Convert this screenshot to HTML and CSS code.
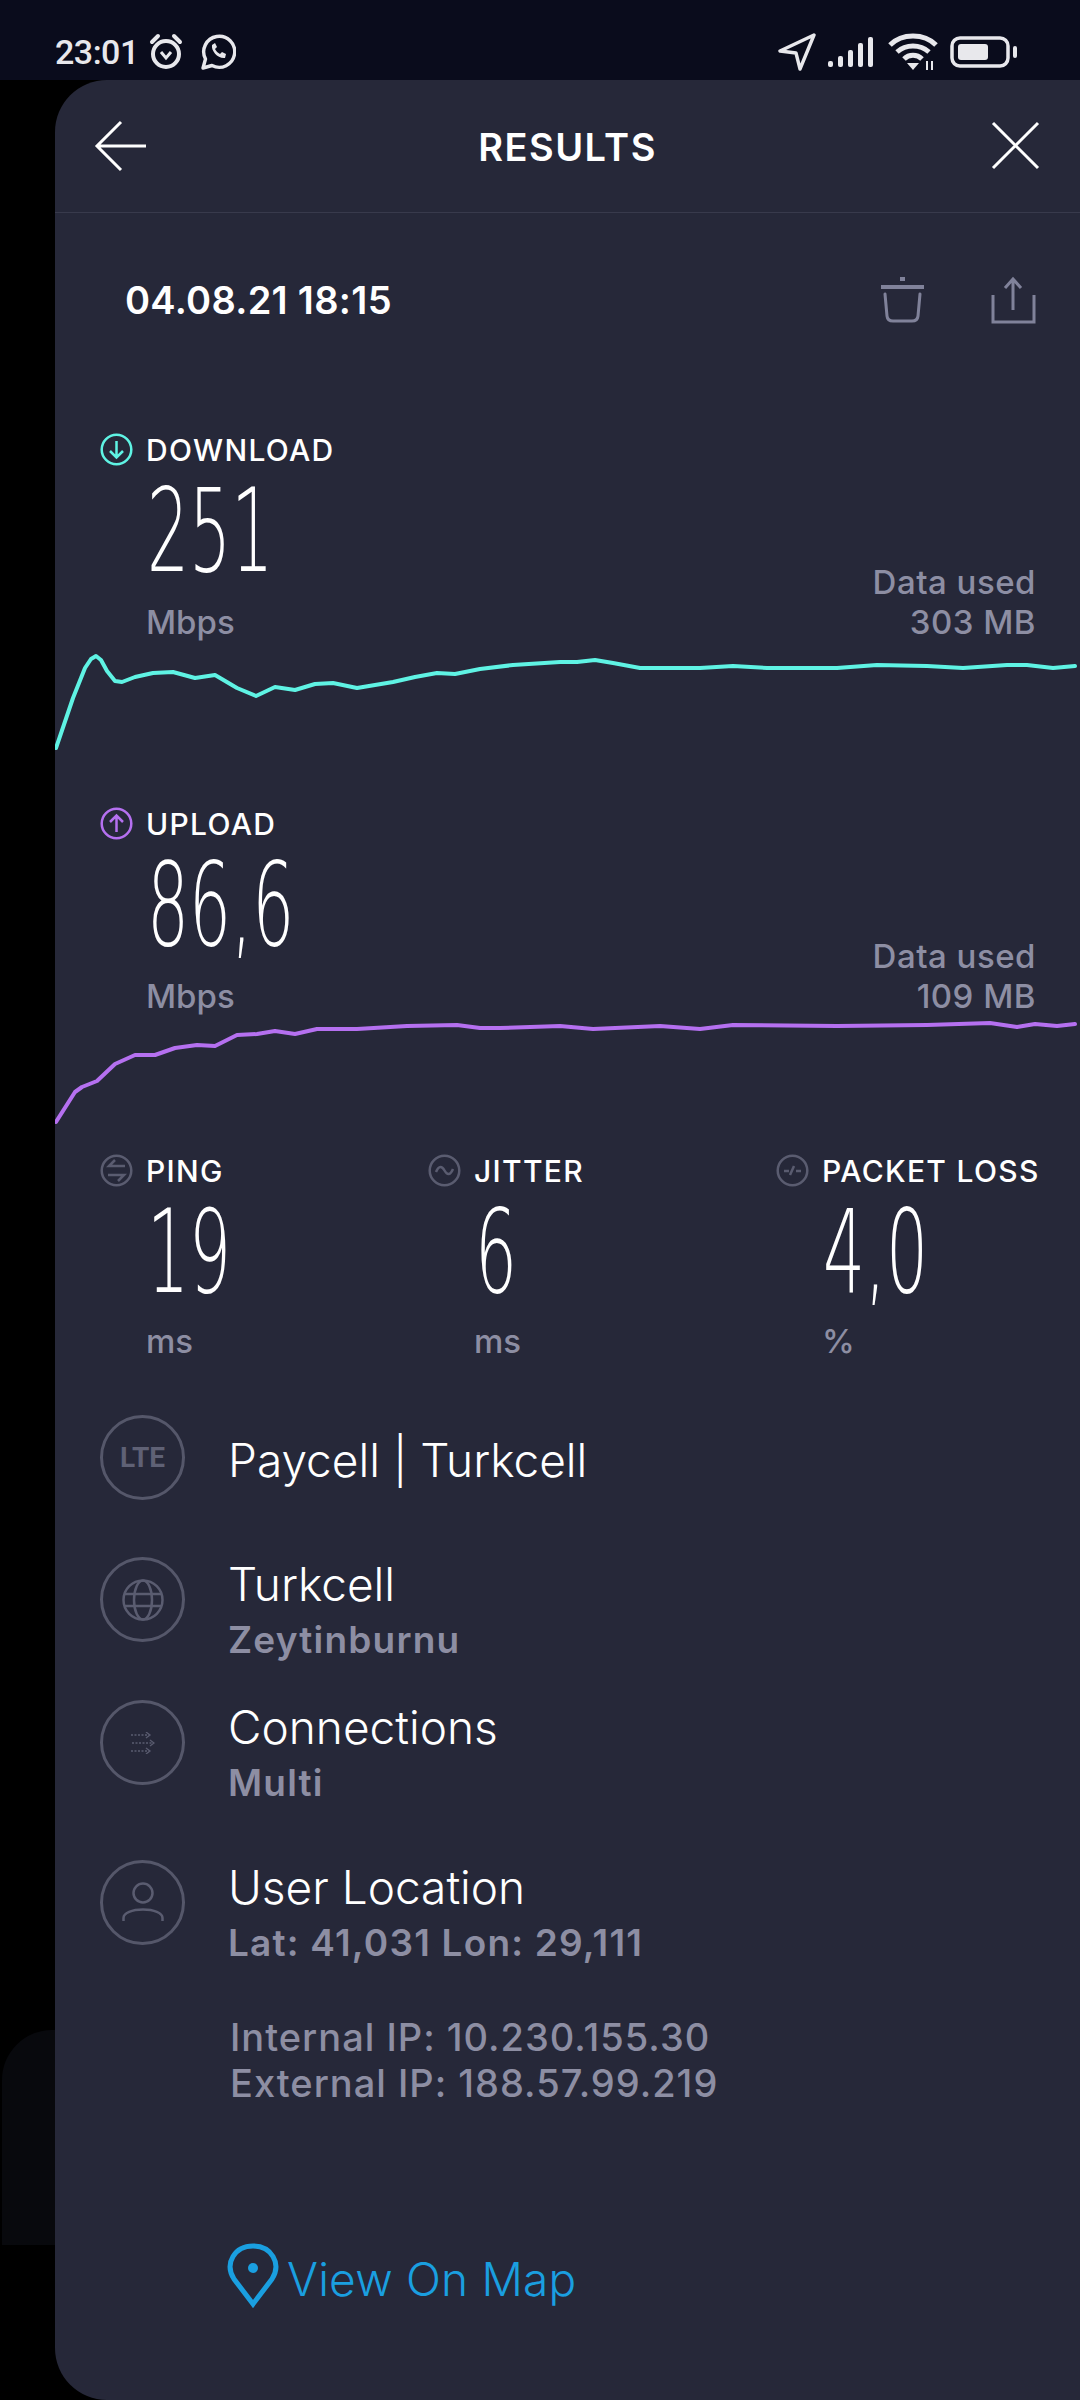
FILE: index.html
```html
<!DOCTYPE html>
<html lang="en">
<head>
  <meta charset="UTF-8">
  <meta name="viewport" content="width=device-width, initial-scale=1.0">
  <title>Results</title>
  <link rel="stylesheet" href="styles.css">
</head>
<body>
  <div class="status-bar">
    <div class="status-left">
      <span class="clock">23:01</span>
      <svg class="st-alarm" width="38" height="38" viewBox="0 0 38 38" fill="none" stroke="#e8e8ec" stroke-width="4"><circle cx="19" cy="21" r="13"/><path d="M5 9 L11 3 M33 9 L27 3" stroke-linecap="round"/><path d="M14 19 L19 25 L24 19" stroke-width="3"/></svg>
      <svg class="st-wa" width="36" height="38" viewBox="0 0 36 38" fill="none" stroke="#e8e8ec" stroke-width="3.4"><path d="M3 35 L5.5 26 A15.5 15.5 0 1 1 12 32.500 Z" stroke-linejoin="round"/><path d="M12 12 C11 18 18 26 25 25 L26 21 L22 19 L20 21 C18 20 16 18 15 16 L17 14 L15 10 Z" fill="#e8e8ec" stroke="none"/></svg>
    </div>
    <div class="status-right">
      <svg width="38" height="38" viewBox="0 0 38 38" fill="none" stroke="#e8e8ec" stroke-width="3.4" stroke-linejoin="round"><path d="M36 2 L2 18 L18 20 L22 36 Z"/></svg>
      <svg width="48" height="32" viewBox="0 0 48 32" fill="#e8e8ec"><rect x="0" y="25" width="5" height="6" rx="2"/><rect x="10" y="20" width="5" height="11" rx="2"/><rect x="20" y="14" width="5" height="17" rx="2"/><rect x="30" y="7" width="5" height="24" rx="2"/><rect x="40" y="1" width="5" height="30" rx="2"/></svg>
      <svg width="50" height="38" viewBox="0 0 50 38" fill="none" stroke="#e8e8ec" stroke-width="5"><path d="M2 12 C14 0 36 0 48 12"/><path d="M9 19 C18 11 32 11 41 19"/><path d="M16 26 C21 21 29 21 34 26"/><path d="M19 30 L25 37 L31 30 Z" fill="#e8e8ec" stroke="none"/><path d="M39 28 V37 M44 28 V37" stroke-width="2"/></svg>
      <svg width="68" height="32" viewBox="0 0 68 32" fill="none"><rect x="2" y="2" width="56" height="28" rx="8" stroke="#e8e8ec" stroke-width="3.500"/><rect x="8" y="8" width="30" height="16" rx="3" fill="#e8e8ec"/><rect x="63" y="10" width="4" height="12" rx="2" fill="#e8e8ec"/></svg>
    </div>
  </div>

  <div class="ghost-card"></div>

  <main class="panel">
    <header class="top-bar">
      <svg width="52" height="52" viewBox="0 0 52 52" fill="none" stroke="#fff" stroke-width="3"><path d="M52 26 H3 M27 2 L3 26 L27 50"/></svg>
      <h1>RESULTS</h1>
      <svg width="52" height="52" viewBox="0 0 52 52" fill="none" stroke="#fff" stroke-width="3"><path d="M4 3 L49 48 M49 3 L4 48"/></svg>
    </header>

    <div class="date-row">
      <span class="date">04.08.21 18:15</span>
      <div class="date-actions">
        <svg width="48" height="48" viewBox="0 0 48 48" fill="none" stroke="#80829a" stroke-width="3"><path d="M2 11 H45" stroke-width="4"/><path d="M21 3 H26" stroke-width="4"/><path d="M6 18 L8 40 Q8.500 45 14 45 H33 Q38.500 45 39 40 L41 18" stroke-linecap="round"/></svg>
        <svg width="48" height="48" viewBox="0 0 48 48" fill="none" stroke="#80829a" stroke-width="3"><path d="M24 34 V3 M16 12 L24 3 L32 12"/><path d="M4 19 V46 H45 V19"/></svg>
      </div>
    </div>

    <section class="metric">
      <div class="label">
        <svg class="label-icon" width="33" height="33" viewBox="0 0 33 33" fill="none" stroke="#5ff3e4" stroke-width="2.500"><circle cx="16.500" cy="16.500" r="14.800"/><path d="M16.500 8 V24 M10 18 L16.500 24.500 L23 18"/></svg>
        <span>DOWNLOAD</span>
      </div>
      <div class="metric-body">
        <div>
          <div class="value"><span class="digits">251</span></div>
          <div class="unit">Mbps</div>
        </div>
        <div class="used">Data used<br>303 MB</div>
      </div>
      <svg class="chart" width="1025" height="105" viewBox="55 645 1025 105" fill="none" stroke="#5ff3e4" stroke-width="4" stroke-linejoin="round" stroke-linecap="round"><polyline points="56,747 73,697 85,667 91,658 96,655 101,659 107,670 115,680 122,681 135,676 153,672 173,671 195,677 215,674 237,687 256,695 275,686 295,689 315,683 333,682 357,687 393,681 415,676 437,672 455,673 480,668 513,664 560,661 577,661 595,659 613,662 640,667 667,667 700,667 733,665 767,667 800,667 837,667 877,664 927,665 963,667 1007,664 1027,664 1053,667 1075,665"/></svg>
    </section>

    <section class="metric">
      <div class="label">
        <svg class="label-icon" width="33" height="33" viewBox="0 0 33 33" fill="none" stroke="#b570f0" stroke-width="2.500"><circle cx="16.500" cy="16.500" r="14.800"/><path d="M16.500 25 V9 M10 15 L16.500 8.500 L23 15"/></svg>
        <span>UPLOAD</span>
      </div>
      <div class="metric-body">
        <div>
          <div class="value"><span class="digits">86,6</span></div>
          <div class="unit">Mbps</div>
        </div>
        <div class="used">Data used<br>109 MB</div>
      </div>
      <svg class="chart" width="1025" height="105" viewBox="55 1018 1025 105" fill="none" stroke="#b570f0" stroke-width="4" stroke-linejoin="round" stroke-linecap="round"><polyline points="56,1120 75,1090 82,1085 97,1079 115,1062 135,1053 155,1053 175,1046 197,1043 215,1044 237,1033 257,1032 275,1029 295,1032 317,1027 357,1027 407,1024 457,1023 480,1026 500,1026 560,1024 593,1027 660,1024 700,1027 733,1023 837,1024 927,1023 990,1021 1017,1025 1035,1022 1057,1024 1075,1022"/></svg>
    </section>

    <section class="stats">
      <div class="stat">
        <div class="label">
          <svg class="label-icon" width="33" height="33" viewBox="0 0 33 33" fill="none" stroke="#5a5c70" stroke-width="2.500"><circle cx="16.500" cy="16.500" r="14.800"/><path d="M25 12 H9 L15 6 M8 21 H24 L18 27"/></svg>
          <span>PING</span>
        </div>
        <div class="value"><span class="digits">19</span></div>
        <div class="unit unit-small">ms</div>
      </div>
      <div class="stat">
        <div class="label">
          <svg class="label-icon" width="33" height="33" viewBox="0 0 33 33" fill="none" stroke="#5a5c70" stroke-width="2.500"><circle cx="16.500" cy="16.500" r="14.800"/><path d="M8 18 C11 11 14 12 16.500 16.500 C19 21 22 22 25 15"/></svg>
          <span>JITTER</span>
        </div>
        <div class="value"><span class="digits">6</span></div>
        <div class="unit unit-small">ms</div>
      </div>
      <div class="stat">
        <div class="label">
          <svg class="label-icon" width="33" height="33" viewBox="0 0 33 33" fill="none" stroke="#5a5c70" stroke-width="2.500"><circle cx="16.500" cy="16.500" r="14.800"/><path d="M8 17 H13 M14 21 L18 12 M20 17 H25"/></svg>
          <span>PACKET LOSS</span>
        </div>
        <div class="value"><span class="digits">4,0</span></div>
        <div class="unit unit-small">%</div>
      </div>
    </section>

    <section class="info">
      <div class="info-row row-carrier">
        <div class="info-icon"><span class="lte">LTE</span></div>
        <div class="info-text"><div class="info-title">Paycell | Turkcell</div></div>
      </div>
      <div class="info-row row-isp">
        <div class="info-icon">
          <svg width="42" height="42" viewBox="0 0 42 42" fill="none" stroke="#5a5c70" stroke-width="2.500"><circle cx="21" cy="21" r="19.500"/><ellipse cx="21" cy="21" rx="9" ry="19.500"/><path d="M2 15 H40 M2 27 H40"/></svg>
        </div>
        <div class="info-text"><div class="info-title">Turkcell</div><div class="info-sub">Zeytinburnu</div></div>
      </div>
      <div class="info-row row-conn">
        <div class="info-icon">
          <svg width="24" height="22" viewBox="0 0 24 22" fill="none" stroke="#5a5c70" stroke-width="1.500"><path d="M0 3 H18 M1 11 H22 M0 19 H18" stroke-dasharray="2 1.500"/><path d="M15 0 L19 3 L15 6 M19 8 L23 11 L19 14 M15 16 L19 19 L15 22" stroke-width="1.300"/></svg>
        </div>
        <div class="info-text"><div class="info-title">Connections</div><div class="info-sub">Multi</div></div>
      </div>
      <div class="info-row row-user">
        <div class="info-icon">
          <svg width="42" height="42" viewBox="0 0 42 42" fill="none" stroke="#5a5c70" stroke-width="2.500"><circle cx="21" cy="11" r="9.500"/><path d="M1.500 39 V36 C1.500 31 10 27.500 21 27.500 C32 27.500 40.500 31 40.500 36 V39"/></svg>
        </div>
        <div class="info-text"><div class="info-title">User Location</div><div class="info-sub">Lat: 41,031 Lon: 29,111</div></div>
      </div>
    </section>

    <div class="ips">
      <div>Internal IP: 10.230.155.30</div>
      <div>External IP: 188.57.99.219</div>
    </div>

    <a class="map-link">
      <svg width="52" height="66" viewBox="0 0 52 66" fill="none" stroke="#1a9fe0" stroke-width="5"><path d="M26 61 L7 36 C-3 20 8 3 26 3 C44 3 55 20 45 36 Z" stroke-linejoin="miter"/><circle cx="26" cy="25" r="5" fill="#1a9fe0" stroke="none"/></svg>
      <span>View On Map</span>
    </a>
  </main>
</body>
</html>
```

FILE: styles.css
```css
* {
  margin: 0;
  padding: 0;
  box-sizing: border-box;
}

body {
  width: 1080px;
  height: 2400px;
  overflow: hidden;
  background: #000;
  color: #fff;
  font-family: Inter, "Open Sans", sans-serif;
  position: relative;
}

/* status bar */
.status-bar {
  height: 80px;
  background: #0a0c1c;
  display: flex;
  justify-content: space-between;
  align-items: center;
  padding: 24px 62px 0 55px;
}

.status-left, .status-right {
  display: flex;
  align-items: center;
}

.status-left {
  font-family: Roboto, sans-serif;
}

.clock {
  font-size: 34px;
  font-weight: 500;
  color: #e8e8ec;
  letter-spacing: -0.5px;
  width: 92px;
}

.st-wa {
  margin-left: 15px;
}

.status-right {
  gap: 12px;
}

.ghost-card {
  position: absolute;
  left: 2px;
  top: 2030px;
  width: 80px;
  height: 215px;
  background: #08090d;
  border-top-left-radius: 50px;
}

/* panel */
.panel {
  position: relative;
  margin-left: 55px;
  height: 2320px;
  background: #262839;
  border-radius: 52px 0 0 52px;
  overflow: hidden;
}

.top-bar {
  height: 133px;
  border-bottom: 1px solid #383a4c;
  display: flex;
  justify-content: space-between;
  align-items: center;
  padding: 0 39px 0 39px;
}

.top-bar h1 {
  font-size: 38px;
  font-weight: 600;
  letter-spacing: 1.5px;
  padding-top: 2px;
}

.date-row {
  height: 174px;
  display: flex;
  justify-content: space-between;
  align-items: center;
  padding: 0 43px 0 70px;
}

.date {
  font-size: 38px;
  font-weight: 600;
  letter-spacing: 0.3px;
}

.date-actions {
  display: flex;
  gap: 62px;
}

.date-actions svg {
  display: block;
}

/* download, upload */
.metric {
  margin-bottom: 56px;
}

.metric:first-of-type {
  margin-top: 46px;
}

.label {
  display: flex;
  align-items: center;
  gap: 13px;
  padding-left: 45px;
  height: 33px;
  font-size: 30px;
  font-weight: 500;
  letter-spacing: 1.3px;
}

.label-icon {
  flex: none;
}

.metric-body {
  display: flex;
  justify-content: space-between;
  align-items: flex-end;
  padding: 0 44px 0 92px;
}

.value {
  height: 120px;
  margin-top: 5px;
  font-family: "DejaVu Sans", sans-serif;
  font-weight: 200;
  font-size: 116px;
  line-height: 120px;
}

.digits {
  display: inline-block;
  transform: scaleX(0.57);
  transform-origin: left center;
}

.unit, .used {
  font-size: 33px;
  font-weight: 500;
  color: #8d8ea3;
  line-height: 40px;
}

.unit {
  margin-top: 11px;
  margin-left: -1px;
}

.used {
  text-align: right;
  letter-spacing: 0.5px;
}

.chart {
  display: block;
  margin-top: 4px;
}

/* ping, jitter, packet loss */
.stats {
  display: grid;
  grid-template-columns: 328px 348px 1fr;
  margin-top: -27px;
}

.stat .value, .stat .unit {
  padding-left: 92px;
}

.stat .unit-small {
  margin-top: 9px;
}

/* connection info */
.info {
  margin-top: 51px;
  padding-left: 45px;
}

.info-row {
  display: flex;
  gap: 43px;
  align-items: flex-start;
}

.info-icon {
  width: 85px;
  height: 85px;
  margin-top: 3px;
  border: 3px solid #55576a;
  border-radius: 50%;
  display: flex;
  justify-content: center;
  align-items: center;
  flex: none;
}

.lte {
  font-family: Roboto, sans-serif;
  font-size: 28px;
  font-weight: 700;
  color: #5f6175;
}

.info-text {
  padding-top: 2px;
}

.info-title {
  font-size: 46px;
  font-weight: 300;
  line-height: 56px;
}

.info-sub {
  font-size: 37px;
  font-weight: 600;
  line-height: 56px;
  letter-spacing: 1.2px;
  color: #8d8ea3;
}

.row-carrier .info-text {
  padding-top: 20px;
}

.row-isp {
  margin-top: 54px;
}

.row-conn {
  margin-top: 29px;
}

.row-user {
  margin-top: 46px;
}

.ips {
  margin-top: 43px;
  padding-left: 175px;
  font-size: 38px;
  font-weight: 500;
  line-height: 46px;
  letter-spacing: 1px;
  color: #8d8ea3;
}

.map-link {
  display: flex;
  align-items: center;
  gap: 8px;
  margin-top: 143px;
  padding-left: 172px;
  color: #1a9fe0;
  font-size: 46px;
  font-weight: 300;
  letter-spacing: 0.2px;
}

.map-link svg {
  margin-top: -6px;
}
```
